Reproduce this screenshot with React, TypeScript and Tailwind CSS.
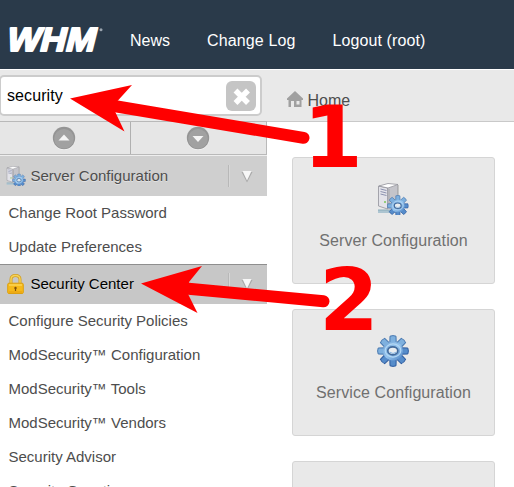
import React from 'react';

const sans = "font-['Liberation_Sans',Arial,sans-serif]";

function Gear({ className = '' }: { className?: string }) {
  return (
    <svg className={className} viewBox="0 0 32 32" fill="none">
      <defs>
        <linearGradient id="gearFace" x1="0" y1="0" x2="1" y2="1">
          <stop offset="0" stopColor="#74a5d6" />
          <stop offset=".5" stopColor="#96c4ee" />
          <stop offset="1" stopColor="#4c82c2" />
        </linearGradient>
      </defs>
      {[0, 45, 90, 135, 180, 225, 270, 315].map((angle) => (
        <path
          key={angle}
          d="M12.8 8.5 13 1.2q3-1.2 6 0L19.2 8.5Z"
          transform={`rotate(${angle} 16 16)`}
          fill={angle > 45 && angle < 250 ? '#568cca' : '#7eb0de'}
          stroke={angle > 45 && angle < 250 ? '#2d5ca0' : '#4878b0'}
          strokeWidth="1"
        />
      ))}
      <ellipse cx="16" cy="16" rx="10" ry="9.4" fill="url(#gearFace)" />
      <ellipse cx="16" cy="15.5" rx="7.8" ry="6.6" stroke="#b4d9f5" strokeWidth="1.2" />
      <ellipse cx="15.8" cy="15.8" rx="5" ry="4" fill="#e9edf0" stroke="#436b9c" strokeWidth="1.7" />
      <path d="M12.5 17q3.5 3 7 0" stroke="#88b8e5" />
    </svg>
  );
}

function ServerIcon({ className = '' }: { className?: string }) {
  return (
    <svg className={className} viewBox="0 0 32 32" fill="none">
      <path d="M1 27h20v3H1Z" fill="#adc5d1" />
      <path d="M1 27h15" stroke="#8aacba" />
      <path d="m11 5 10-3v22l-10 3Z" fill="#c4c4ca" />
      <path d="m1.5 3 9 2v21l-9-3Z" fill="#e3e3e9" stroke="#92929a" strokeWidth=".8" />
      <path d="M2 3 11 .5 21 1.5 11 5Z" fill="#fff" stroke="#909099" strokeWidth=".8" />
      <path d="m3.5 6 6 1.5M3.5 8.5l6 1.5M3.5 11l6 1.5" stroke="#8d93b0" />
      <path d="M12 6v19" stroke="#a5a5aa" />
      <path d="M21 2v20" stroke="#8a8a8a" strokeWidth=".8" />
      <circle cx="8" cy="19" r="1" fill="#79c657" />
      <g transform="translate(10 12) scale(.68)">
        <Gear />
      </g>
    </svg>
  );
}

function Lock() {
  return (
    <svg className="h-[20px] w-[17px]" viewBox="0 0 17 20" fill="none">
      <path d="M4 10V5.5q0-4 4.5-4t4.5 4V10" stroke="#d3a021" strokeWidth="3" />
      <path d="M4 10V5.5q0-4 4.5-4t4.5 4V10" stroke="#f6d35a" strokeWidth="1.4" />
      <rect x=".7" y="9.2" width="15.6" height="10.3" rx="1.2" fill="#f6b91b" stroke="#dda010" />
      <path d="M2 11h13" stroke="#ffe270" />
      <path d="M2 18h13" stroke="#e69d10" />
      <circle cx="8.5" cy="14" r="1.2" fill="#80510c" />
      <path d="M8.5 14v3" stroke="#80510c" strokeWidth="1.2" />
    </svg>
  );
}

function RoundButton({ down = false }: { down?: boolean }) {
  return (
    <svg className="h-[24px] w-[24px]" viewBox="0 0 24 24">
      <circle cx="12" cy="12.7" r="11.3" fill="#f7f7f7" />
      <circle cx="12" cy="12" r="11.2" fill="#949494" />
      <circle cx="12" cy="12.8" r="9.8" fill="#a1a1a1" />
      {down ? <path d="M6.5 10h11L12 16Z" fill="#f4f4f4" /> : <path d="M6.5 14.5 12 8.5l5.5 6Z" fill="#f4f4f4" />}
    </svg>
  );
}

function Section({ title, icon, active = false }: { title: string; icon: React.ReactNode; active?: boolean }) {
  return (
    <div className={`flex h-10 items-center ${active ? 'border-t border-[#8e8e8e] bg-[#c7c7c7] pb-px text-black' : 'bg-[#cfcfcf] text-[#4d4d4d]'}`}>
      <div className="flex w-[30.5px] shrink-0 justify-center">{icon}</div>
      <span className="grow text-[15px] leading-5 [text-shadow:0_1px_0_#ffffff66]">{title}</span>
      <div className="flex h-[22px] w-[39px] items-center border-l border-[#b8b8b8] pl-[12px] shadow-[inset_1px_0_#d7d7d7]">
        <svg className="h-[13px] w-[12px]" viewBox="0 0 12 13">
          <path d="M.5 2h11L6 12.5Z" fill="#aaa" />
          <path d="M1.5 1h9L6 10.5Z" fill="#f7f7f7" />
        </svg>
      </div>
    </div>
  );
}

function Items({ names }: { names: string[] }) {
  return (
    <ul>
      {names.map((name) => (
        <li key={name} className="flex h-[34px] items-center pl-[8.5px] text-[15px] leading-5 text-[#4d4d4d]">{name}</li>
      ))}
    </ul>
  );
}

function Card({ title, icon }: { title?: string; icon?: React.ReactNode }) {
  return (
    <div className="flex h-[127px] w-[203px] shrink-0 flex-col items-center rounded-[3px] border border-[#d5d5d5] bg-[#e9e9e9] pt-[25px]">
      <div className="-ml-px h-8 w-8">{icon}</div>
      <span className="mt-4 text-[16px] leading-5 tracking-[0.09px] text-[#707070]">{title}</span>
    </div>
  );
}

export default function App() {
  return (
    <div className={`relative h-[487px] w-[514px] overflow-hidden bg-white ${sans}`}>
      <header className="flex h-[69px] bg-[#2a3a4a] text-white">
        <svg className="h-[69px] w-[130px] shrink-0" viewBox="0 0 130 69">
          <text transform="translate(5 51) skewX(-14)" textLength="89" lengthAdjust="spacingAndGlyphs" fontSize="33.5" fontWeight="700" fill="white" stroke="white" strokeWidth="2" strokeLinejoin="round">WHM</text>
          <circle cx="101" cy="29.7" r="1.5" fill="#9aa4af" />
        </svg>
        <nav className="flex items-center gap-[37px] pt-[12px] text-[16px] leading-5">
          <span>News</span>
          <span className="tracking-[0.13px]">Change Log</span>
          <span className="tracking-[0.1px]">Logout (root)</span>
        </nav>
      </header>

      <div className="mt-px flex h-[417px]">
        <aside className="w-[267px] shrink-0 overflow-hidden">
          <div className="h-[51px] bg-[#e9e9e9] pt-[5px]">
            <div className="-ml-px flex h-[41px] w-[263px] items-center justify-between rounded-[5px] border-2 border-[#ccc] bg-white pr-[4px] pl-[6px]">
              <span className="text-[16px] leading-5 tracking-[0.1px] text-black">security</span>
              <svg className="h-[30px] w-[30px]" viewBox="0 0 30 30">
                <rect width="30" height="30" rx="6" fill="#c5c5c5" />
                <path d="m9.5 9.5 12.5 12.5M22 9.5 9.5 22" stroke="white" strokeWidth="5.5" />
              </svg>
            </div>
          </div>
          <div className="flex h-[34px] border-y border-[#b9b9b9] bg-[#e6e6e6]">
            <div className="flex w-[131px] items-center justify-center border-r border-[#b0b0b0] pr-[2px]"><RoundButton /></div>
            <div className="flex w-[136px] items-center justify-center border-r border-[#b9b9b9] pr-[2px]"><RoundButton down /></div>
          </div>
          <div className="h-px bg-[#eee]" />
          <Section title="Server Configuration" icon={<ServerIcon className="ml-px h-5 w-5" />} />
          <div className="h-[68px]"><Items names={['Change Root Password', 'Update Preferences']} /></div>
          <Section title="Security Center" icon={<Lock />} active />
          <Items names={['Configure Security Policies', 'ModSecurity™ Configuration', 'ModSecurity™ Tools', 'ModSecurity™ Vendors', 'Security Advisor', 'Security Questions']} />
        </aside>

        <main className="min-w-0 grow">
          <div className="flex h-[52px] items-center border-b border-[#c9c9c9] bg-[#e9e9e9] pt-[10px] pl-[20px] text-[16px] leading-5 text-[#4d4d4d]">
            <svg className="-mt-[4px] mr-[4.5px] h-4 w-4" viewBox="0 0 16 16">
              <path d="M8 0 16 7.5V9H14.5v7H1.5V9H0V7.5Z" fill="#a0a0a0" />
              <path d="M4 10h3v6H4ZM9.5 10h3v3.5h-3Z" fill="#e9e9e9" />
            </svg>
            <span>Home</span>
          </div>
          <div className="flex flex-col gap-[25px] pt-[35px] pl-[25px]">
            <Card title="Server Configuration" icon={<ServerIcon className="h-8 w-8" />} />
            <Card title="Service Configuration" icon={<Gear className="h-8 w-8" />} />
            <Card />
          </div>
        </main>
      </div>

      <svg className="pointer-events-none absolute inset-0 h-[487px] w-[514px]" viewBox="0 0 514 487">
        <g fill="red" stroke="red">
          <path d="M117 106.5 303.5 137.8M186 288.5 323.5 301.3" fill="none" strokeWidth="12" strokeLinecap="round" />
          <path d="M70 98.5 132 85 117.5 101 115.5 112.5 124.5 131.5Z" stroke="none" />
          <path d="M141 283.5 202 266 189 282 188 294 197.5 313Z" stroke="none" />
        </g>
        <g fill="red" fontFamily="DejaVu Sans" fontWeight="700" fontSize="86">
          <text x="303" y="167">1</text>
          <text x="319" y="330">2</text>
        </g>
      </svg>
    </div>
  );
}
